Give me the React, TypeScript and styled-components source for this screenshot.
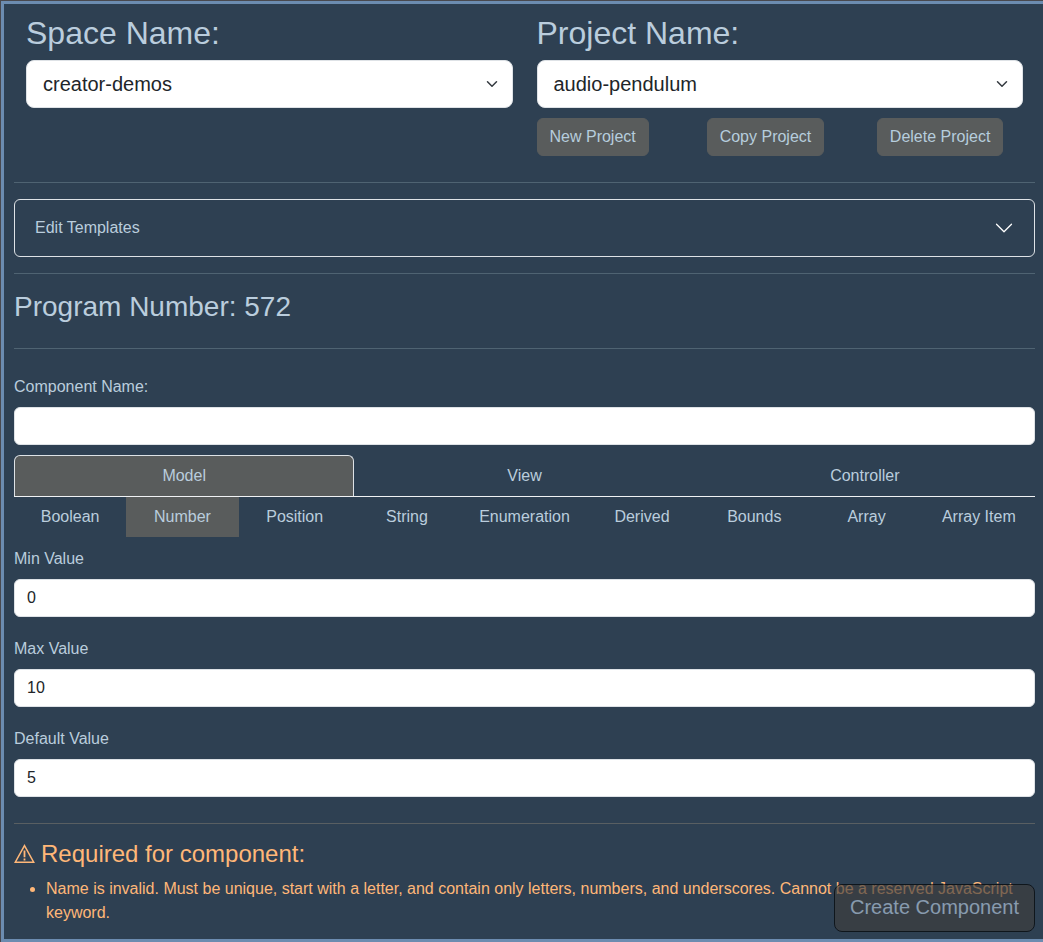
import React from "react";
import styled, { createGlobalStyle } from "styled-components";

const GlobalStyle = createGlobalStyle`
  *, *::before, *::after { box-sizing: border-box; }
  body {
    margin: 0;
    background: #49494e;
    color: #bacddd;
    font: 400 16px/24px "Liberation Sans", Arial, sans-serif;
  }
  input, select, button { font-family: inherit; }
`;

const Panel = styled.main`
  position: relative;
  height: 941px;
  margin: 1px 0 0 1px;
  padding: 10px 8px 0 10px;
  background: #2e4052;
  border: 3px solid #6c8cb0;
  border-right: 0;
  overflow: hidden;
`;

const Row = styled.div`
  display: flex;
  height: 152px;
`;

const Column = styled.section`
  flex: 1 1 0;
  padding: 0 12px;
`;

const Title = styled.h2`
  margin: 0 0 8px;
  font-size: 32px;
  font-weight: 400;
  line-height: 38.4px;
`;

const SelectBox = styled.div`
  display: flex;
  align-items: center;
  justify-content: space-between;
  height: 48px;
  padding: 0 14px 0 16px;
  color: #212529;
  background: #fff;
  border: 1px solid #dee2e6;
  border-radius: 8px;
  font-size: 20px;
  line-height: 30px;
`;

const ButtonRow = styled.div`
  display: grid;
  grid-template-columns: repeat(3, 1fr);
  margin: 10px -24px 0 0;
  justify-items: start;
`;

const Button = styled.button`
  height: 38px;
  padding: 6px 12px;
  color: #b6cddd;
  background: #595c5c;
  border: 1px solid #595c5c;
  border-radius: 6px;
  font-size: 16px;
  line-height: 24px;
`;

const Divider = styled.hr<{ $warm?: boolean }>`
  height: 1px;
  margin: 16px 0;
  border: 0;
  background: ${(p) => (p.$warm ? "#595f62" : "#4f6372")};
`;

const Accordion = styled.div`
  display: flex;
  align-items: center;
  justify-content: space-between;
  height: 58px;
  padding: 0 20px;
  border: 1px solid #dee2e6;
  border-radius: 6px;
`;

const Program = styled.h3`
  height: 42px;
  margin: 0;
  font-size: 28px;
  font-weight: 400;
  line-height: 33.6px;
`;

const Field = styled.div<{ $top: number }>`
  padding-top: ${(p) => p.$top}px;
`;

const Label = styled.label`
  display: block;
  margin-bottom: 8px;
`;

const Input = styled.input`
  display: block;
  width: 100%;
  height: 38px;
  padding: 6px 12px;
  color: #212529;
  background: #fff;
  border: 1px solid #dee2e6;
  border-radius: 6px;
  font-size: 16px;
  line-height: 24px;
`;

const Tabs = styled.nav`
  display: flex;
  margin-top: 10px;
  border-bottom: 1px solid #f0f2f4;
`;

const Tab = styled.a<{ $active?: boolean }>`
  flex: 1 1 0;
  height: 41px;
  padding: 8px 16px;
  text-align: center;
  border: 1px solid ${(p) => (p.$active ? "#dee2e6" : "transparent")};
  border-bottom: 0;
  border-radius: 6px 6px 0 0;
  background: ${(p) => (p.$active ? "#595c5c" : "transparent")};
`;

const Types = styled.nav`
  display: flex;
`;

const TypeTab = styled.a<{ $active?: boolean }>`
  flex: 1 1 0;
  min-width: min-content;
  height: 40px;
  padding: 8px 16px;
  text-align: center;
  white-space: nowrap;
  background: ${(p) => (p.$active ? "#595c5c" : "transparent")};
`;

const Bottom = styled.div`
  padding-top: 10px;
`;

const Warning = styled.section`
  color: #ffb778;
`;

const WarningTitle = styled.h4`
  display: flex;
  align-items: center;
  gap: 6px;
  margin: 0 0 8px;
  font-size: 24px;
  font-weight: 400;
  line-height: 28.8px;
`;

const Messages = styled.ul`
  margin: 0;
  padding-left: 32px;
`;

const CreateButton = styled.button`
  position: absolute;
  right: 8px;
  bottom: 7px;
  height: 48px;
  padding: 7px 15px 9px;
  color: #b9cce0;
  background: #3e3e3e;
  border: 1px solid #000;
  border-radius: 8px;
  font-size: 20px;
  line-height: 30px;
  opacity: 0.65;
`;

const Chevron = ({ size, color, width }: { size: number; color: string; width: number }) => (
  <svg width={size} height={size} viewBox="0 0 16 16" fill="none" stroke={color} strokeWidth={width} strokeLinecap="round" strokeLinejoin="round">
    <path d="m2 5 6 6 6-6" />
  </svg>
);

const WarningIcon = () => (
  <svg width="21" height="21" viewBox="0 0 21 21" fill="none" stroke="currentColor" strokeWidth="1.5">
    <path d="M10.5 1.6 19.7 18.2H1.3Z" />
    <path d="M10.5 6.6v6.6M10.5 14.6v1.8" strokeWidth="1.8" />
  </svg>
);

const types = ["Boolean", "Number", "Position", "String", "Enumeration", "Derived", "Bounds", "Array", "Array Item"];

export default function App() {
  return (
    <>
      <GlobalStyle />
      <Panel>
        <Row>
          <Column>
            <Title>Space Name:</Title>
            <SelectBox>creator-demos<Chevron size={12} color="#343a40" width={2} /></SelectBox>
          </Column>
          <Column>
            <Title>Project Name:</Title>
            <SelectBox>audio-pendulum<Chevron size={12} color="#343a40" width={2} /></SelectBox>
            <ButtonRow>
              <Button>New Project</Button>
              <Button>Copy Project</Button>
              <Button>Delete Project</Button>
            </ButtonRow>
          </Column>
        </Row>
        <Divider />
        <Accordion>Edit Templates<Chevron size={20} color="#fff" width={1} /></Accordion>
        <Divider />
        <Program>Program Number: 572</Program>
        <Divider />
        <Field $top={10}>
          <Label htmlFor="name">Component Name:</Label>
          <Input id="name" />
        </Field>
        <Tabs>
          <Tab $active>Model</Tab>
          <Tab>View</Tab>
          <Tab>Controller</Tab>
        </Tabs>
        <Types>
          {types.map((t) => <TypeTab key={t} $active={t === "Number"}>{t}</TypeTab>)}
        </Types>
        <Field $top={10}>
          <Label htmlFor="min">Min Value</Label>
          <Input id="min" defaultValue="0" />
        </Field>
        <Field $top={20}>
          <Label htmlFor="max">Max Value</Label>
          <Input id="max" defaultValue="10" />
        </Field>
        <Field $top={20}>
          <Label htmlFor="default">Default Value</Label>
          <Input id="default" defaultValue="5" />
        </Field>
        <Bottom>
          <Divider $warm />
          <Warning>
            <WarningTitle><WarningIcon />Required for component:</WarningTitle>
            <Messages>
              <li>Name is invalid. Must be unique, start with a letter, and contain only letters, numbers, and underscores. Cannot be a reserved JavaScript keyword.</li>
            </Messages>
          </Warning>
        </Bottom>
        <CreateButton disabled>Create Component</CreateButton>
      </Panel>
    </>
  );
}
